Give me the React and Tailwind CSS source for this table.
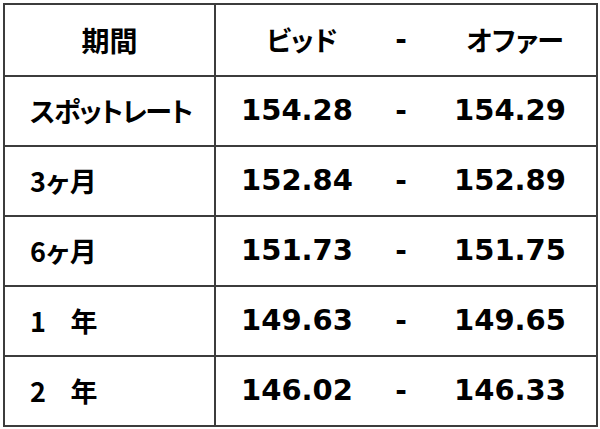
const rows = [
  { label: "スポットレート", bid: "154.28", offer: "154.29", tight: true },
  { label: "3ヶ月", bid: "152.84", offer: "152.89" },
  { label: "6ヶ月", bid: "151.73", offer: "151.75" },
  { label: "1", unit: "年", bid: "149.63", offer: "149.65" },
  { label: "2", unit: "年", bid: "146.02", offer: "146.33" },
];

const jp =
  "font-['Noto_Sans_CJK_JP','DejaVu_Sans',sans-serif] font-bold [font-feature-settings:'palt']";
const num = "font-['DejaVu_Sans','Noto_Sans_CJK_JP',sans-serif] font-bold";

function Row({ children, right, first }) {
  return (
    <div className={`flex h-[70.3px] ${first ? "" : "border-t-2 border-[#3c3c3c]"}`}>
      <div className="w-[211px] flex items-center">{children}</div>
      <div className="flex-1 flex items-center border-l-2 border-[#3c3c3c]">{right}</div>
    </div>
  );
}

function Values({ a, b, font, head }) {
  return (
    <>
      <div className={`w-[162px] text-center ${head ? "pl-[10px]" : ""} ${font}`}>{a}</div>
      <div className={`w-[46px] text-center ${num} text-[28px]`}>-</div>
      <div className={`w-[172px] text-center ${head ? "pl-[10px]" : ""} ${font}`}>{b}</div>
    </>
  );
}

export default function App() {
  return (
    <div className="w-[600px] h-[429px] bg-white pt-[3px] pl-[3px] text-black">
      <div className="w-[595px] h-[424px] border-2 border-[#3c3c3c] flex flex-col">
        <Row
          first
          right={<Values head a="ビッド" b="オファー" font={`${jp} text-[27px]`} />}
        >
          <div className={`w-full text-center ${jp} text-[28px]`}>期間</div>
        </Row>
        {rows.map((r) => (
          <Row
            key={r.label}
            right={<Values a={r.bid} b={r.offer} font={`${num} text-[29px]`} />}
          >
            <div
              className={`pl-[25px] ${jp} text-[27px] ${
                r.tight ? "tracking-[-1.3px]" : "tracking-[0.5px]"
              }`}
            >
              {r.label}
              {r.unit && <span className="ml-[24px]">{r.unit}</span>}
            </div>
          </Row>
        ))}
      </div>
    </div>
  );
}
